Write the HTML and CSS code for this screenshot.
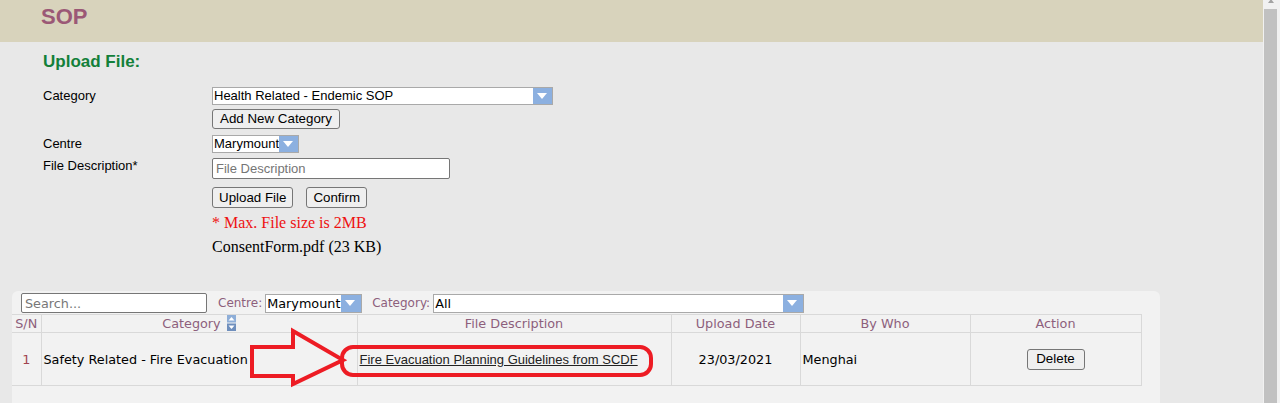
FILE: index.html
```html
<!DOCTYPE html>
<html lang="en">

<head>
  <meta charset="UTF-8">
  <meta name="viewport" content="width=device-width, initial-scale=1.0">
  <title>SOP</title>
  <link rel="stylesheet" href="styles.css">
</head>

<body>
  <div class="screen">
    <div class="page">
      <header class="banner">
        <h1>SOP</h1>
      </header>

      <section class="upload">
        <h2>Upload File:</h2>

        <div class="row row--category">
          <span class="row__label">Category</span>
          <div class="row__field">
            <span class="picker picker--wide">
              <span class="picker__value">Health Related - Endemic SOP</span>
              <span class="picker__arrow"></span>
            </span>
            <button type="button" class="btn btn--add">Add New Category</button>
          </div>
        </div>

        <div class="row row--centre">
          <span class="row__label">Centre</span>
          <div class="row__field">
            <span class="picker">
              <span class="picker__value">Marymount</span>
              <span class="picker__arrow"></span>
            </span>
          </div>
        </div>

        <div class="row row--desc">
          <span class="row__label">File Description*</span>
          <div class="row__field">
            <input type="text" class="text-input" placeholder="File Description">
          </div>
        </div>

        <div class="upload__actions">
          <button type="button" class="btn">Upload File</button>
          <button type="button" class="btn">Confirm</button>
        </div>
        <p class="upload__note">* Max. File size is 2MB</p>
        <p class="upload__file">ConsentForm.pdf (23 KB)</p>
      </section>

      <section class="panel">
        <div class="toolbar">
          <input type="text" class="toolbar__search" placeholder="Search...">
          <span class="toolbar__label">Centre:</span>
          <span class="picker picker--tool">
            <span class="picker__value">Marymount</span>
            <span class="picker__arrow"></span>
          </span>
          <span class="toolbar__label">Category:</span>
          <span class="picker picker--tool picker--all">
            <span class="picker__value">All</span>
            <span class="picker__arrow"></span>
          </span>
        </div>

        <table class="sop-table">
          <colgroup>
            <col style="width: 29px">
            <col style="width: 316px">
            <col style="width: 314px">
            <col style="width: 129px">
            <col style="width: 170px">
            <col style="width: 171px">
          </colgroup>
          <thead>
            <tr>
              <th>S/N</th>
              <th>Category
                <svg class="sort-icon" width="9" height="16" viewBox="0 0 9 16">
                  <rect x="0" y="0" width="9" height="7.5" fill="#8eaed8" />
                  <rect x="0" y="8.5" width="9" height="7.5" fill="#6f8fbd" />
                  <path d="M1.5 5.5 L4.5 2 L7.5 5.5 Z" fill="#fff" />
                  <path d="M1.5 10.5 L4.5 14 L7.5 10.5 Z" fill="#fff" />
                </svg>
              </th>
              <th>File Description</th>
              <th>Upload Date</th>
              <th>By Who</th>
              <th>Action</th>
            </tr>
          </thead>
          <tbody>
            <tr>
              <td class="cell-sn">1</td>
              <td>Safety Related - Fire Evacuation</td>
              <td><a href="#" class="file-link">Fire Evacuation Planning Guidelines from SCDF</a></td>
              <td class="cell-center">23/03/2021</td>
              <td>Menghai</td>
              <td class="cell-center"><button type="button" class="btn btn--delete">Delete</button></td>
            </tr>
          </tbody>
        </table>
      </section>

      <!-- red annotation drawn over the table -->
      <svg class="markup" width="1262" height="403" viewBox="0 0 1262 403">
        <polygon points="252,347 293,347 293,331 343,360 293,384 293,376 252,376"
          fill="#f2f2f2" stroke="#ed1c24" stroke-width="4" stroke-linejoin="miter" />
        <rect x="342" y="347" width="309" height="28" rx="11" ry="11"
          fill="none" stroke="#ed1c24" stroke-width="4" />
      </svg>
    </div>

    <div class="scrollbar">
      <span class="scrollbar__arrow"></span>
      <span class="scrollbar__thumb"></span>
    </div>
  </div>
</body>

</html>
```

FILE: styles.css
```css
html,
body {
  margin: 0;
  height: 100%;
  overflow: hidden;
}

body {
  background: #e8e8e8;
  font-family: "Liberation Sans", Arial, sans-serif;
  font-size: 13px;
  color: #000;
}

.screen {
  display: flex;
  height: 403px;
}

.page {
  position: relative;
  flex: 1;
  min-width: 0;
}

/* top banner */
.banner {
  height: 42px;
  background: #d8d3bc;
  padding-left: 41px;
  box-sizing: border-box;
}

.banner h1 {
  margin: 0;
  padding-top: 4px;
  font-size: 22px;
  line-height: 25px;
  font-weight: bold;
  color: #9b5876;
}

/* upload form */
.upload {
  padding-left: 43px;
}

.upload h2 {
  margin: 10px 0 0;
  font-size: 17px;
  line-height: 20px;
  font-weight: bold;
  color: #13803a;
}

.row {
  display: flex;
}

.row__label {
  width: 169px;
  flex-shrink: 0;
  line-height: 15px;
}

.row__field {
  display: flex;
  flex-direction: column;
  align-items: flex-start;
}

.row--category {
  margin-top: 15px;
}

.row--category .row__label {
  padding-top: 1px;
}

.row--centre {
  margin-top: 6px;
}

.row--centre .row__label {
  padding-top: 1px;
}

.row--desc {
  margin-top: 5px;
}

.picker {
  display: inline-flex;
  height: 18px;
  box-sizing: border-box;
  border: 1px solid #a9a9a9;
  background: #fff;
}

.picker--wide {
  width: 341px;
}

.picker__value {
  flex: 1;
  padding-left: 1px;
  line-height: 16px;
  white-space: nowrap;
}

.picker__arrow {
  width: 19px;
  background: #8cb0e0;
  position: relative;
}

.picker__arrow::after {
  content: "";
  position: absolute;
  left: 4px;
  top: 5px;
  border-left: 5.5px solid transparent;
  border-right: 5.5px solid transparent;
  border-top: 6px solid #fff;
}

.btn {
  font-family: "Liberation Sans", Arial, sans-serif;
  font-size: 13.33px;
  color: #000;
  background: #efefef;
  border: 1px solid #767676;
  border-radius: 3px;
  padding: 0 6px;
  height: 20px;
  line-height: 16px;
}

.btn--add {
  margin-top: 4px;
  width: 128px;
  padding: 0;
}

.text-input {
  width: 238px;
  height: 21px;
  box-sizing: border-box;
  border: 1px solid #767676;
  border-radius: 2px;
  padding: 0 3px;
  font-family: "Liberation Sans", Arial, sans-serif;
  font-size: 13px;
  background: #fff;
}

.text-input::placeholder {
  color: #757575;
}

.upload__actions {
  display: flex;
  gap: 13px;
  margin: 8px 0 0 169px;
}

.upload__actions .btn {
  height: 21px;
}

.upload__note,
.upload__file {
  margin: 6px 0 0 169px;
  font-family: "Liberation Serif", "Times New Roman", serif;
  font-size: 16px;
  line-height: 18px;
}

.upload__note {
  color: #ee1111;
}

/* list panel */
.panel {
  margin: 35px 0 0 12px;
  width: 1148px;
  height: 112px;
  background: #f2f2f2;
  border-radius: 6px 6px 0 0;
  font-family: "DejaVu Sans", Verdana, sans-serif;
  font-size: 12.8px;
}

.toolbar {
  display: flex;
  align-items: center;
  height: 23px;
  padding-left: 9px;
  font-size: 12px;
}

.toolbar__search {
  width: 186px;
  height: 20px;
  box-sizing: border-box;
  margin: 1px 11px 0 0;
  border: 1px solid #767676;
  border-radius: 2px;
  padding: 0 3px;
  font-family: "DejaVu Sans", Verdana, sans-serif;
  font-size: 12.8px;
  background: #fff;
}

.toolbar__search::placeholder {
  color: #777;
}

.toolbar__label {
  color: #8d5f7c;
  margin-right: 3px;
}

.picker--tool {
  height: 19px;
  margin-top: 1px;
  width: 97px;
  margin-right: 10px;
  font-size: 12.8px;
}

.picker--tool .picker__value {
  line-height: 17px;
}

.picker--tool .picker__arrow {
  width: 20px;
}

.picker--all {
  width: 371px;
}

.sop-table {
  width: 1129px;
  table-layout: fixed;
  border-collapse: collapse;
}

.sop-table th,
.sop-table td {
  border: 1px solid #d9d9d9;
  padding: 0 2px;
  white-space: nowrap;
  overflow: hidden;
}

.sop-table tr> :first-child {
  border-left: none;
}

.sop-table th {
  height: 17px;
  font-weight: normal;
  color: #8d5f7c;
  line-height: 16px;
  text-align: center;
}

.sop-table td {
  height: 52px;
}

.sort-icon {
  vertical-align: -3px;
  margin-left: 2px;
}

.cell-sn {
  text-align: center;
  color: #a0424f;
}

.cell-center {
  text-align: center;
}

.file-link {
  font-family: "Liberation Sans", Arial, sans-serif;
  font-size: 13px;
  color: #222;
}

.btn--delete {
  height: 21px;
  width: 58px;
  padding: 0;
}

/* annotation overlay */
.markup {
  position: absolute;
  left: 0;
  top: 0;
  pointer-events: none;
}

/* fake window scrollbar */
.scrollbar {
  width: 17px;
  flex-shrink: 0;
  background: #f1f1f1;
  position: relative;
}

.scrollbar__arrow {
  position: absolute;
  left: 5px;
  top: -1px;
  border-left: 3.5px solid transparent;
  border-right: 3.5px solid transparent;
  border-bottom: 4px solid #a3a3a3;
}

.scrollbar__thumb {
  position: absolute;
  left: 1px;
  top: 9px;
  bottom: 0;
  width: 13px;
  background: #c1c1c1;
}
```
